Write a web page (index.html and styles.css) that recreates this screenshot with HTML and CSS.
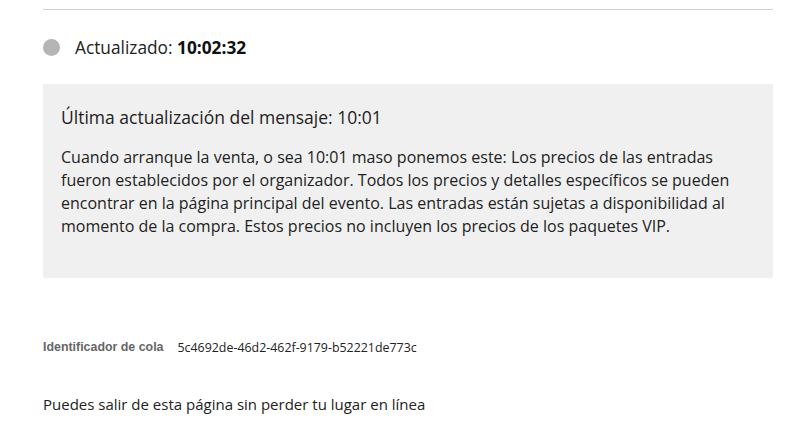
FILE: index.html
```html
<!DOCTYPE html>
<html lang="es">
<head>
    <meta charset="UTF-8">
    <meta name="viewport" content="width=device-width, initial-scale=1.0">
    <title>Cola virtual</title>
    <link rel="stylesheet" href="styles.css">
</head>
<body>
    <div class="container">
        <hr class="divider">
        <div class="status">
            <span class="status-dot"></span>
            <p>Actualizado: <strong id="updated-time">10:02:32</strong></p>
        </div>
        <div class="message-box">
            <h2>Última actualización del mensaje: 10:01</h2>
            <p>Cuando arranque la venta, o sea 10:01 maso ponemos este: Los precios de las entradas fueron establecidos por el organizador. Todos los precios y detalles específicos se pueden encontrar en la página principal del evento. Las entradas están sujetas a disponibilidad al momento de la compra. Estos precios no incluyen los precios de los paquetes VIP.</p>
        </div>
        <div class="queue-id">
            <span class="queue-label">Identificador de cola</span>
            <span class="queue-value">5c4692de-46d2-462f-9179-b52221de773c</span>
        </div>
        <p class="leave-note">Puedes salir de esta página sin perder tu lugar en línea</p>
    </div>
</body>
</html>
```

FILE: styles.css
```css
* {
    margin: 0;
    padding: 0;
    box-sizing: border-box;
}

body {
    background-color: #ffffff;
    font-family: "Open Sans", Arial, sans-serif;
    color: #222;
}

.container {
    width: 730px;
    margin-left: 43px;
    padding-top: 9px;
}

.divider {
    border: none;
    border-top: 1px solid #d0d0d0;
}

.status {
    display: flex;
    align-items: center;
    gap: 15px;
    height: 74px;
    font-size: 17.3px;
}

.status-dot {
    width: 17px;
    height: 17px;
    border-radius: 50%;
    background-color: #b5b5b5;
}

.status strong {
    font-weight: 700;
    color: #111;
}

.message-box {
    background-color: #f0f0f0;
    padding: 20px 18px 40px 18px;
    height: 194px;
}

.message-box h2 {
    font-size: 17.5px;
    font-weight: 400;
    line-height: 26px;
    margin-bottom: 16px;
}

.message-box p {
    font-size: 16px;
    line-height: 23px;
}

.queue-id {
    display: flex;
    align-items: center;
    gap: 14px;
    margin-top: 60px;
    height: 18px;
}

.queue-label {
    font-family: "Liberation Sans", Arial, sans-serif;
    font-weight: 700;
    font-size: 12.4px;
    color: #666;
}

.queue-value {
    font-size: 12.4px;
    color: #222;
}

.leave-note {
    margin-top: 37px;
    font-size: 15px;
    line-height: 23px;
}
```
